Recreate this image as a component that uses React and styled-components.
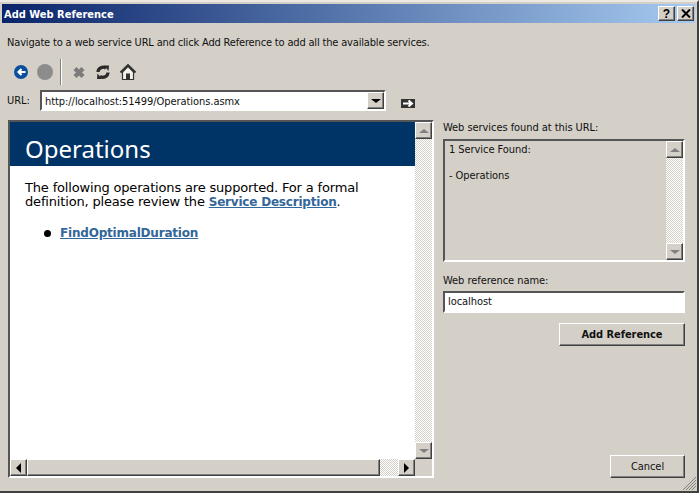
import React from "react";
import styled, { createGlobalStyle, css } from "styled-components";

const Global = createGlobalStyle`
  html, body { margin: 0; padding: 0; background: #d4d0c8; }
  * { box-sizing: border-box; }
`;
const uiFont = `"DejaVu Sans Condensed", "Noto Sans", sans-serif`;
const face = "#d4d0c8";

const raised = css`
  background: ${face};
  border: 1px solid;
  border-color: #fff #404040 #404040 #fff;
  box-shadow: inset -1px -1px 0 #808080;
`;
const sunken = css`
  border: 2px solid;
  border-color: #555 #fff #fff #555;
`;
const track = css`
  background: repeating-conic-gradient(#d4d0c8 0 25%, #fff 0 50%) 0 0 / 2px 2px;
`;

const Window = styled.div`
  position: relative;
  width: 699px;
  height: 493px;
  background: ${face};
  border-top: 2px solid #ece9e2;
  border-right: 2px solid #404040;
  border-bottom: 2px solid #404040;
  padding: 2px 0 0 2px;
  display: flex;
  flex-direction: column;
  font: 11px ${uiFont};
  letter-spacing: -0.06px;
  color: #111;
  overflow: hidden;
`;
const TitleBar = styled.div`
  height: 19px;
  flex: none;
  margin-right: 2px;
  background: linear-gradient(90deg, #0a246a, #a6caf0);
  display: flex;
  align-items: center;
  justify-content: flex-end;
  gap: 2px;
  padding: 0 1px 0 2px;
`;
const TitleText = styled.div`
  flex: 1;
  padding-top: 1px;
  color: #fff;
  font: bold 11px ${uiFont};
  letter-spacing: 0;
`;
const CaptionButton = styled.div`
  ${raised}
  width: 17px;
  height: 15px;
  font: bold 12px "Liberation Sans", sans-serif;
  color: #000;
  display: flex;
  align-items: center;
  justify-content: center;
`;
const Body = styled.div`
  flex: 1;
  min-height: 0;
  display: flex;
  flex-direction: column;
  padding: 0 12px 13px 6px;
`;
const Instructions = styled.div`
  height: 15px;
  margin: 12px 0 0 -1px;
  line-height: 15px;
  letter-spacing: -0.17px;
`;
const Toolbar = styled.div`
  height: 26px;
  margin-top: 9px;
  display: flex;
  align-items: center;
  padding-left: 5px;
`;
const ToolIcon = styled.svg`
  width: 18px;
  height: 18px;
  flex: none;
  margin-right: ${(p) => p.$gap}px;
`;
const ToolSeparator = styled.div`
  width: 2px;
  height: 26px;
  margin-right: 8px;
  background: linear-gradient(90deg, #808080 50%, #fff 50%);
`;
const UrlRow = styled.div`
  height: 21px;
  margin-top: 5px;
  display: flex;
  align-items: center;
`;
const UrlLabel = styled.div`
  width: 32px;
  margin-left: -1px;
  padding-right: 0;
  flex: none;
`;
const Combo = styled.div`
  ${sunken}
  width: 346px;
  height: 21px;
  margin-left: 1px;
  background: #fff;
  display: flex;
  align-items: center;
  padding-left: 3px;
`;
const ComboText = styled.div`
  flex: 1;
  padding-top: 1px;
`;
const ComboButton = styled.div`
  ${raised}
  width: 17px;
  height: 17px;
  display: flex;
  align-items: center;
  justify-content: center;
`;
const GoIcon = styled.svg`
  width: 14px;
  height: 9px;
  margin: 5px 0 0 15px;
`;
const Main = styled.div`
  flex: 1;
  min-height: 0;
  margin-top: 9px;
  display: flex;
  gap: 9px;
`;
const Browser = styled.div`
  ${sunken}
  width: 426px;
  display: grid;
  grid-template-columns: minmax(0, 1fr) 17px;
  grid-template-rows: minmax(0, 1fr) 17px;
`;
const Page = styled.div`
  background: #fff;
  font-family: "DejaVu Sans", Verdana, sans-serif;
  min-width: 0;
`;
const Banner = styled.div`
  height: 44px;
  background: #003366;
  color: #fff;
  font: 24px "Noto Sans", "DejaVu Sans", sans-serif;
  line-height: 53px;
  letter-spacing: 0;
  padding-left: 15px;
`;
const Paragraph = styled.p`
  margin: 15px 0 0 15px;
  font-size: 13px;
  line-height: 14px;
  letter-spacing: -0.17px;
  color: #000;
`;
const PageLink = styled.a`
  color: #336699;
  font-weight: bold;
  font-size: 12px;
  letter-spacing: -0.2px;
  text-decoration: underline;
`;
const OpList = styled.ul`
  margin: 17px 0 0 0;
  padding: 0 0 0 34px;
  list-style: none;
  font-size: 13px;
  line-height: 15px;
`;
const OpItem = styled.li`
  display: flex;
  align-items: center;
  gap: 9px;
`;
const Bullet = styled.span`
  width: 7px;
  height: 7px;
  border-radius: 50%;
  background: #000;
`;
const VScroll = styled.div`
  ${track}
  display: flex;
  flex-direction: column;
  justify-content: space-between;
`;
const HScroll = styled.div`
  ${track}
  display: flex;
`;
const ScrollThumb = styled.div`
  ${raised}
  width: 353px;
`;
const ScrollButton = styled.div`
  ${raised}
  width: 17px;
  height: 17px;
  flex: none;
  margin-left: ${(p) => (p.$end ? "auto" : 0)};
  display: flex;
  align-items: center;
  justify-content: center;
`;
const Corner = styled.div`
  background: ${face};
`;
const Arrow = styled.i`
  width: 0;
  height: 0;
  display: block;
  border-style: solid;
  ${(p) =>
    p.$dir === "up" &&
    css`border-width: 0 5px 4px; border-color: transparent transparent ${p.$c};`}
  ${(p) =>
    p.$dir === "down" &&
    css`border-width: 4px 5px 0; border-color: ${p.$c} transparent transparent;`}
  ${(p) =>
    p.$dir === "left" &&
    css`border-width: 5px 5px 5px 0; border-color: transparent ${p.$c} transparent transparent;`}
  ${(p) =>
    p.$dir === "right" &&
    css`border-width: 5px 0 5px 5px; border-color: transparent transparent transparent ${p.$c};`}
`;
const Side = styled.div`
  flex: 1;
  min-width: 0;
  display: flex;
  flex-direction: column;
`;
const FieldLabel = styled.div`
  height: 15px;
  line-height: 15px;
  margin-top: ${(p) => p.$top}px;
`;
const ServicesBox = styled.div`
  ${sunken}
  height: 123px;
  margin-top: 4px;
  display: flex;
  justify-content: space-between;
  padding-left: 4px;
`;
const ServicesText = styled.div`
  line-height: 13px;
  padding-top: 2px;
  white-space: pre-line;
`;
const ServicesScroll = styled(VScroll)`
  width: 17px;
`;
const NameInput = styled.div`
  ${sunken}
  height: 22px;
  margin-top: 3px;
  background: #fff;
  padding-left: 3px;
  line-height: 17px;
`;
const ActionRow = styled.div`
  display: flex;
  justify-content: flex-end;
  margin-top: ${(p) => p.$top || 0};
`;
const ActionButton = styled.div`
  ${raised}
  width: ${(p) => p.$w}px;
  height: 23px;
  display: flex;
  align-items: center;
  justify-content: center;
  font-weight: ${(p) => (p.$bold ? 700 : 400)};
`;
const Grip = styled.svg`
  position: absolute;
  right: 0;
  bottom: 0;
  width: 17px;
  height: 17px;
`;

const VButtons = () => (
  <>
    <ScrollButton><Arrow $dir="up" $c="#808080" /></ScrollButton>
    <ScrollButton><Arrow $dir="down" $c="#808080" /></ScrollButton>
  </>
);

export default function App() {
  return (
    <>
      <Global />
      <Window>
        <TitleBar>
          <TitleText>Add Web Reference</TitleText>
          <CaptionButton>?</CaptionButton>
          <CaptionButton>
            <svg width="10" height="9" viewBox="0 0 10 9">
              <path d="M1 0.5 L9 8.5 M9 0.5 L1 8.5" stroke="#000" strokeWidth="2" />
            </svg>
          </CaptionButton>
        </TitleBar>
        <Body>
          <Instructions>Navigate to a web service URL and click Add Reference to add all the available services.</Instructions>
          <Toolbar>
            <ToolIcon viewBox="0 0 18 18" $gap={6}>
              <circle cx="8" cy="9" r="7" fill="#0a4f9e" />
              <path d="M12.5 9H6 M8.5 6 L5.5 9 L8.5 12" fill="none" stroke="#fff" strokeWidth="2.2" />
            </ToolIcon>
            <ToolIcon viewBox="0 0 18 18" $gap={5}>
              <circle cx="8" cy="9" r="8" fill="#8c8c8c" />
            </ToolIcon>
            <ToolSeparator />
            <ToolIcon viewBox="0 0 18 18" $gap={6}>
              <path d="M5 5.5 L13 13.5 M13 5.5 L5 13.5" stroke="#7c7c7c" strokeWidth="4.4" />
            </ToolIcon>
            <ToolIcon viewBox="0 0 18 18" $gap={7}>
              <path d="M4 9 A5 5 0 0 1 12 5.2" fill="none" stroke="#2b2b2b" strokeWidth="3.2" />
              <path d="M10 2.5 L15 2.5 L14.5 8 Z" fill="#2b2b2b" />
              <path d="M14 9.5 A5 5 0 0 1 6 13.3" fill="none" stroke="#2b2b2b" strokeWidth="3.2" />
              <path d="M8 16 L3 16 L3.5 10.5 Z" fill="#2b2b2b" />
            </ToolIcon>
            <ToolIcon viewBox="0 0 18 18" $gap={0}>
              <path d="M1.5 9.5 L9 2 L16.5 9.5" fill="none" stroke="#2b2b2b" strokeWidth="1.8" />
              <path d="M3.5 9 V16.5 H14.5 V9 L9 3.5 Z" fill="#f4f2ec" stroke="#333" strokeWidth="1.2" />
              <rect x="7" y="10.5" width="4" height="6" fill="#333" />
            </ToolIcon>
          </Toolbar>
          <UrlRow>
            <UrlLabel>URL:</UrlLabel>
            <Combo>
              <ComboText>http://localhost:51499/Operations.asmx</ComboText>
              <ComboButton><Arrow $dir="down" $c="#000" /></ComboButton>
            </Combo>
            <GoIcon viewBox="0 0 14 9">
              <rect width="14" height="9" fill="#333" />
              <path d="M2 4.5 H10 M7.5 1.5 L11 4.5 L7.5 7.5" fill="none" stroke="#fff" strokeWidth="2" />
            </GoIcon>
          </UrlRow>
          <Main>
            <Browser>
              <Page>
                <Banner>Operations</Banner>
                <Paragraph>
                  The following operations are supported. For a formal definition, please review the{" "}
                  <PageLink>Service Description</PageLink>.
                </Paragraph>
                <OpList>
                  <OpItem><Bullet /><PageLink>FindOptimalDuration</PageLink></OpItem>
                </OpList>
              </Page>
              <VScroll><VButtons /></VScroll>
              <HScroll>
                <ScrollButton><Arrow $dir="left" $c="#000" /></ScrollButton>
                <ScrollThumb />
                <ScrollButton $end><Arrow $dir="right" $c="#000" /></ScrollButton>
              </HScroll>
              <Corner />
            </Browser>
            <Side>
              <FieldLabel $top={0}>Web services found at this URL:</FieldLabel>
              <ServicesBox>
                <ServicesText>{"1 Service Found:\n\n- Operations"}</ServicesText>
                <ServicesScroll><VButtons /></ServicesScroll>
              </ServicesBox>
              <FieldLabel $top={11}>Web reference name:</FieldLabel>
              <NameInput>localhost</NameInput>
              <ActionRow $top="10px"><ActionButton $w={126} $bold>Add Reference</ActionButton></ActionRow>
              <ActionRow $top="auto"><ActionButton $w={75}>Cancel</ActionButton></ActionRow>
            </Side>
          </Main>
        </Body>
        <Grip viewBox="0 0 17 17">
          <path d="M16 3 L3 16 M16 6 L6 16 M16 9 L9 16 M16 12 L12 16" stroke="#808080" strokeWidth="1" />
        </Grip>
      </Window>
    </>
  );
}
